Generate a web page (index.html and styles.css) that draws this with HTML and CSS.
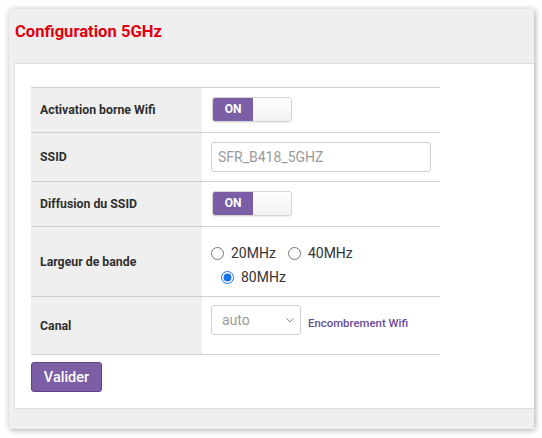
FILE: index.html
```html
<!DOCTYPE html>
<html lang="fr">
<head>
    <meta charset="UTF-8">
    <meta name="viewport" content="width=device-width, initial-scale=1.0">
    <title>Configuration 5GHz</title>
    <link rel="stylesheet" href="styles.css">
</head>
<body>
    <div class="panel">
        <h1 class="panel-title">Configuration 5GHz</h1>
        <div class="panel-body">
            <table class="config">
                <colgroup>
                    <col class="col-label">
                    <col>
                </colgroup>
                <tr class="row-toggle">
                    <th>Activation borne Wifi</th>
                    <td><div class="toggle"><span class="toggle-on">ON</span><span class="toggle-off"></span></div></td>
                </tr>
                <tr class="row-input">
                    <th>SSID</th>
                    <td><input class="text-input" type="text" value="SFR_B418_5GHZ"></td>
                </tr>
                <tr class="row-toggle">
                    <th>Diffusion du SSID</th>
                    <td><div class="toggle"><span class="toggle-on">ON</span><span class="toggle-off"></span></div></td>
                </tr>
                <tr class="row-radio">
                    <th>Largeur de bande</th>
                    <td>
                        <div class="radios">
                            <label class="radio"><input type="radio" name="bw"><span>20MHz</span></label>
                            <label class="radio"><input type="radio" name="bw"><span>40MHz</span></label>
                            <label class="radio radio-wrap"><input type="radio" name="bw" checked><span>80MHz</span></label>
                        </div>
                    </td>
                </tr>
                <tr class="row-select">
                    <th>Canal</th>
                    <td>
                        <div class="canal">
                            <span class="select-wrap">
                                <select class="select"><option>auto</option></select>
                                <svg class="chevron" width="8" height="5" viewBox="0 0 8 5"><path d="M0.5 0.5 L4 4 L7.5 0.5" fill="none" stroke="#8a8a8a" stroke-width="1"/></svg>
                            </span>
                            <a class="link" href="#">Encombrement Wifi</a>
                        </div>
                    </td>
                </tr>
            </table>
            <button class="btn">Valider</button>
        </div>
    </div>
</body>
</html>
```

FILE: styles.css
```css
body{
    margin: 0;
    padding: 9px;
    background: #fff;
    font-family: Roboto, "Liberation Sans", sans-serif;
}
.panel{
    width: 525px;
    background: #efefef;
    box-shadow: 1px 1px 6px rgba(0, 0, 0, 0.35);
    padding-bottom: 20px;
}
.panel-title{
    margin: 0;
    padding: 13px 6px 21px;
    font-size: 16.6px;
    line-height: 20px;
    font-weight: 700;
    color: #e2000f;
}
.panel-body{
    margin-left: 5px;
    background: #fff;
    border: 1px solid #dedede;
    border-right: none;
    padding: 23px 16px 16px;
}
.config{
    width: 409px;
    table-layout: fixed;
    border-collapse: collapse;
    border-bottom: 1px solid #d0d0d0;
}
.col-label{
    width: 171px;
}
.config tr{
    border-top: 1px solid #d0d0d0;
}
.config th{
    background: #efefef;
    text-align: left;
    padding: 0 9px;
    font-size: 12.3px;
    font-weight: 700;
    color: #2f2f2f;
}
.config td{
    padding: 9px 10px 10px 10px;
    vertical-align: top;
}
.row-input td{
    padding: 9px 9px 9px 9px;
}
.row-radio td{
    padding: 14px 0 7px 9px;
}
.row-select td{
    padding: 8px 9px 19px;
}

.toggle{
    display: flex;
    width: 80px;
    height: 25px;
    box-sizing: border-box;
    border: 1px solid #d4d4d4;
    border-radius: 3px;
    overflow: hidden;
    box-shadow: 0 1px 1px rgba(0, 0, 0, 0.08);
}
.toggle-on{
    width: 40px;
    background: #7b5ea6;
    color: #fff;
    font-size: 12px;
    font-weight: 700;
    line-height: 23px;
    text-align: center;
}
.toggle-off{
    flex: 1;
    background: linear-gradient(#fff, #f1f1f1);
}

.text-input{
    display: block;
    width: 220px;
    height: 30px;
    box-sizing: border-box;
    border: 1px solid #cfcfcf;
    border-radius: 3px;
    padding: 0 6px;
    margin: 0;
    font-family: Roboto, "Liberation Sans", sans-serif;
    font-size: 14px;
    color: #9a9a9a;
}

.radios{
    display: flex;
    flex-wrap: wrap;
    width: 220px;
}
.radio{
    display: flex;
    align-items: center;
    gap: 7px;
    height: 24px;
    margin-right: 12px;
    font-size: 14px;
    color: #333;
}
.radio input{
    width: 13px;
    height: 13px;
    margin: 0;
    accent-color: #1a73e8;
}
.radio-wrap{
    margin-left: 10px;
}

.canal{
    display: flex;
    align-items: center;
}
.select-wrap{
    position: relative;
    display: inline-block;
}
.select{
    appearance: none;
    display: block;
    width: 90px;
    height: 30px;
    border: 1px solid #cfcfcf;
    border-radius: 3px;
    padding: 0 10px;
    background: #fff;
    font-family: Roboto, "Liberation Sans", sans-serif;
    font-size: 14px;
    color: #9a9a9a;
}
.chevron{
    position: absolute;
    right: 7px;
    top: 13px;
}
.link{
    margin-left: 7px;
    margin-top: 5px;
    font-size: 11.4px;
    font-weight: 500;
    color: #6a4c9c;
    text-decoration: none;
}

.btn{
    display: block;
    margin-top: 7px;
    width: 71px;
    height: 30px;
    background: #7b5ea6;
    border: 1px solid #5d4486;
    border-radius: 3px;
    color: #fff;
    font-family: Roboto, "Liberation Sans", sans-serif;
    font-size: 14.5px;
    font-weight: 500;
    cursor: pointer;
}
```
